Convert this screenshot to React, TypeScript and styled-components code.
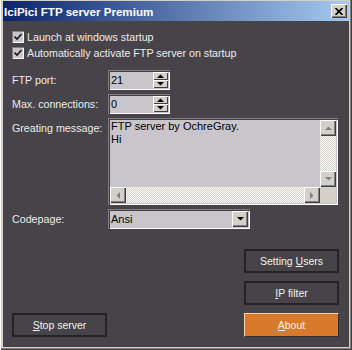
import styled, { createGlobalStyle } from "styled-components";

const GlobalStyle = createGlobalStyle`
    html, body {
        margin: 0;
        padding: 0;
        background: #464448;
    }
    * {
        box-sizing: border-box;
    }
`;

const FACE = "#d4d0c8";
const FIELD = "#c8c6ca";
const DITHER = `repeating-conic-gradient(#ffffff 0 25%, #d4d0c8 0 50%) 0 0 / 2px 2px`;

const Frame = styled.div`
    width: 352px;
    height: 350px;
    display: flex;
    flex-direction: column;
    padding: 1px 3px 3px 3px;
    background: ${FACE};
    box-shadow: inset 1px 0 #ffffff, inset -1px -1px #404040, inset -2px -2px #808080;
    font-family: "Liberation Sans", Arial, sans-serif;
`;

const TitleBar = styled.div`
    height: 20px;
    display: flex;
    align-items: center;
    justify-content: space-between;
    padding: 0 2px 0 1px;
    background: linear-gradient(to right, #0a246a, #a6caf0);
`;

const Title = styled.span`
    color: #ffffff;
    font-weight: bold;
    font-size: 11.6px;
`;

const CloseButton = styled.div`
    width: 16px;
    height: 14px;
    display: flex;
    align-items: center;
    justify-content: center;
    background: ${FACE};
    box-shadow: inset 1px 1px #ffffff, inset -1px -1px #404040, inset -2px -2px #808080;
`;

const Body = styled.div`
    flex: 1;
    display: flex;
    flex-direction: column;
    padding: 8px 10px 10px 9px;
    background: #464448;
    color: #ececec;
    font-size: 10.7px;
`;

const CheckRow = styled.label`
    height: 16px;
    display: flex;
    align-items: center;
    gap: 3px;
`;

const CheckBox = styled.span`
    width: 12px;
    height: 12px;
    display: flex;
    align-items: center;
    justify-content: center;
    background: ${FIELD};
    box-shadow: inset 1px 1px #808080, inset -1px -1px #ffffff;
`;

const Form = styled.div`
    margin-top: 9px;
    display: grid;
    grid-template-columns: 96px auto;
    row-gap: 4px;
    align-items: center;
`;

const Label = styled.span<{ $top?: boolean }>`
    align-self: ${(p) => (p.$top ? "start" : "center")};
    padding-top: ${(p) => (p.$top ? "4px" : "0")};
`;

const Field = styled.div<{ $width: number; $height?: number }>`
    width: ${(p) => p.$width}px;
    height: ${(p) => p.$height ?? 20}px;
    display: flex;
    align-items: center;
    justify-content: space-between;
    padding: 2px;
    background: ${FIELD};
    color: #000000;
    box-shadow: inset 1px 1px #808080, inset 2px 2px #404040, inset -1px -1px #ffffff;
`;

const FieldText = styled.span`
    padding-left: 1px;
    font-size: 11px;
`;

const Spin = styled.div`
    width: 15px;
    height: 16px;
    display: flex;
    flex-direction: column;
`;

const SpinPart = styled.div`
    flex: 1;
    display: flex;
    align-items: center;
    justify-content: center;
    background: ${FACE};
    box-shadow: inset 1px 1px #ffffff, inset -1px -1px #404040;
`;

const Memo = styled.div`
    width: 230px;
    height: 87px;
    display: grid;
    grid-template-columns: 1fr 16px;
    grid-template-rows: 1fr 16px;
    padding: 2px;
    background: ${FIELD};
    color: #000000;
    box-shadow: inset 1px 1px #808080, inset 2px 2px #404040, inset -1px -1px #ffffff;
`;

const MemoText = styled.div`
    padding: 0 1px;
    font-size: 11px;
    line-height: 13px;
`;

const VTrack = styled.div`
    display: flex;
    flex-direction: column;
    justify-content: space-between;
    background: ${DITHER};
`;

const HTrack = styled.div`
    display: flex;
    justify-content: space-between;
    background: ${DITHER};
`;

const Corner = styled.div`
    background: ${FACE};
`;

const ArrowButton = styled.div`
    width: 16px;
    height: 16px;
    display: flex;
    align-items: center;
    justify-content: center;
    background: ${FACE};
    box-shadow: inset 1px 1px #ffffff, inset -1px -1px #404040, inset -2px -2px #808080;
`;

const Actions = styled.div`
    margin-top: auto;
    display: flex;
    flex-direction: column;
    align-items: flex-end;
    gap: 8px;
`;

const BottomRow = styled.div`
    align-self: stretch;
    display: flex;
    justify-content: space-between;
`;

const Button = styled.button<{ $accent?: boolean }>`
    width: 95px;
    height: 24px;
    padding: 0;
    font-family: "Liberation Sans", Arial, sans-serif;
    font-size: 10.5px;
    color: #f2f2f2;
    background: ${(p) => (p.$accent ? "#d97a2b" : "#464448")};
    border: ${(p) => (p.$accent ? "1px solid" : "2px solid")};
    border-color: ${(p) => (p.$accent ? "#fbd2a8 #2e2c2e #2e2c2e #fbd2a8" : "#232224")};
    u {
        text-decoration: underline;
    }
`;

const Tri = ({ dir, color = "#000" }: { dir: "up" | "down" | "left" | "right"; color?: string }) => {
    const pts = {
        up: "0,4 7,4 3.5,0.5",
        down: "0,0 7,0 3.5,3.5",
        left: "4,0 4,7 0.5,3.5",
        right: "0,0 0,7 3.5,3.5",
    }[dir];
    const vert = dir === "up" || dir === "down";
    return (
        <svg width={vert ? 7 : 4} height={vert ? 4 : 7} viewBox={vert ? "0 0 7 4" : "0 0 4 7"}>
            <polygon points={pts} fill={color} />
        </svg>
    );
};

const Check = () => (
    <svg width="8" height="8" viewBox="0 0 8 8">
        <path d="M0.5 3.5 L3 6 L7.5 1" stroke="#1a1a1a" strokeWidth="1.6" fill="none" />
    </svg>
);

const SpinField = ({ value }: { value: string }) => (
    <Field $width={62}>
        <FieldText>{value}</FieldText>
        <Spin>
            <SpinPart>
                <Tri dir="up" />
            </SpinPart>
            <SpinPart>
                <Tri dir="down" />
            </SpinPart>
        </Spin>
    </Field>
);

export default function App() {
    return (
        <>
            <GlobalStyle />
            <Frame>
                <TitleBar>
                    <Title>IciPici FTP server Premium</Title>
                    <CloseButton>
                        <svg width="8" height="7" viewBox="0 0 8 7">
                            <path d="M0.5 0 L7.5 7 M7.5 0 L0.5 7" stroke="#000" strokeWidth="1.6" />
                        </svg>
                    </CloseButton>
                </TitleBar>
                <Body>
                    <CheckRow>
                        <CheckBox>
                            <Check />
                        </CheckBox>
                        Launch at windows startup
                    </CheckRow>
                    <CheckRow>
                        <CheckBox>
                            <Check />
                        </CheckBox>
                        Automatically activate FTP server on startup
                    </CheckRow>

                    <Form>
                        <Label>FTP port:</Label>
                        <SpinField value="21" />
                        <Label>Max. connections:</Label>
                        <SpinField value="0" />
                        <Label $top>Greating message:</Label>
                        <Memo>
                            <MemoText>
                                FTP server by OchreGray.
                                <br />
                                Hi
                            </MemoText>
                            <VTrack>
                                <ArrowButton>
                                    <Tri dir="up" color="#808080" />
                                </ArrowButton>
                                <ArrowButton>
                                    <Tri dir="down" color="#808080" />
                                </ArrowButton>
                            </VTrack>
                            <HTrack>
                                <ArrowButton>
                                    <Tri dir="left" color="#808080" />
                                </ArrowButton>
                                <ArrowButton>
                                    <Tri dir="right" color="#808080" />
                                </ArrowButton>
                            </HTrack>
                            <Corner />
                        </Memo>
                        <Label>Codepage:</Label>
                        <Field $width={142}>
                            <FieldText>Ansi</FieldText>
                            <ArrowButton>
                                <Tri dir="down" />
                            </ArrowButton>
                        </Field>
                    </Form>

                    <Actions>
                        <Button>
                            Setting <u>U</u>sers
                        </Button>
                        <Button>
                            <u>I</u>P filter
                        </Button>
                        <BottomRow>
                            <Button>
                                <u>S</u>top server
                            </Button>
                            <Button $accent>
                                <u>A</u>bout
                            </Button>
                        </BottomRow>
                    </Actions>
                </Body>
            </Frame>
        </>
    );
}
